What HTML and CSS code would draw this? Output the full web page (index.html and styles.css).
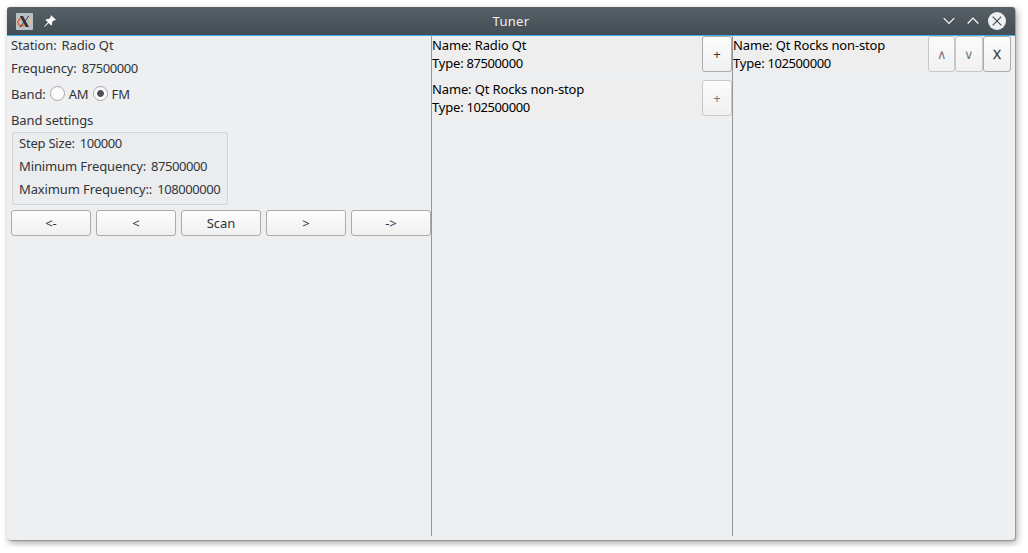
FILE: index.html
```html
<!DOCTYPE html>
<html lang="en">
<head>
<meta charset="utf-8">
<title>Tuner</title>
<link rel="stylesheet" href="styles.css">
</head>
<body>
<div class="window">
  <header class="titlebar">
    <div class="side">
      <svg class="app-icon" width="17" height="17" viewBox="0 0 17 17">
        <rect width="17" height="17" rx="1" fill="#b9c1c5"/>
        <path d="M6.500 5C3 5.500 1.500 8 2.200 10.500c.8 2.200 3.500 2.800 6.300 1.800" fill="none" stroke="#ea6a3c" stroke-width="1.700"/>
        <path d="M11 5c3.500.5 5 2.500 3.700 5-.8 1.500-2.500 2.300-4.500 2.700" fill="none" stroke="#ecc28e" stroke-width="1.200"/>
        <path d="M3.800 3h3.200l6 11H9.800z" fill="#30363a"/>
        <path d="M13 2.700L4 14.200" stroke="#30363a" stroke-width="1"/>
      </svg>
      <svg class="pin" width="12" height="12" viewBox="0 0 12 12">
        <path d="M7.200.2l4.600 4.600-1 .7-.8-.2-2 2 .2 2.200-1.100.9-2.400-2.400L.8 11.800l-.6-.6L3.900 7.300 1.500 4.900l1.100-1 2.200.2 2-2.100-.2-.9z" fill="#fcfcfc"/>
      </svg>
    </div>
    <div class="title">Tuner</div>
    <div class="side controls">
      <svg width="12" height="8" viewBox="0 0 12 8"><path d="M.7 1.200L6 6.500l5.300-5.300" class="stroke"/></svg>
      <svg width="12" height="8" viewBox="0 0 12 8"><path d="M.7 6.500L6 1.200l5.300 5.300" class="stroke"/></svg>
      <svg class="close" width="18" height="18" viewBox="0 0 18 18"><circle cx="9" cy="9" r="9" fill="#eff0f1"/><path d="M4.700 4.700l8.600 8.600M13.300 4.700l-8.600 8.600" stroke="#475057" stroke-width="1.200"/></svg>
    </div>
  </header>
  <main class="content">
    <section class="tuner">
      <div class="row"><span>Station:</span><span>Radio Qt</span></div>
      <div class="row"><span>Frequency:</span><span class="num">87500000</span></div>
      <div class="row band"><span>Band:</span><i class="radio"></i><span>AM</span><i class="radio on"></i><span>FM</span></div>
      <div class="row heading">Band settings</div>
      <div class="group">
        <div class="row step"><span>Step Size:</span><span class="num">100000</span></div>
        <div class="row"><span>Minimum Frequency:</span><span class="num">87500000</span></div>
        <div class="row"><span>Maximum Frequency::</span><span class="num">108000000</span></div>
      </div>
      <div class="buttons">
        <button class="btn">&lt;-</button>
        <button class="btn">&lt;</button>
        <button class="btn">Scan</button>
        <button class="btn">&gt;</button>
        <button class="btn">-&gt;</button>
      </div>
    </section>
    <section class="list stations">
      <div class="item">
        <div class="info"><div class="name">Name: Radio Qt</div><div>Type: <span class="num">87500000</span></div></div>
        <button class="btn tall plus">+</button>
      </div>
      <div class="item">
        <div class="info"><div class="name">Name: Qt Rocks non-stop</div><div>Type: <span class="num">102500000</span></div></div>
        <button class="btn tall plus" disabled>+</button>
      </div>
    </section>
    <section class="list presets">
      <div class="item">
        <div class="info"><div class="name">Name: Qt Rocks non-stop</div><div>Type: <span class="num">102500000</span></div></div>
        <button class="btn tall arrow" disabled>∧</button>
        <button class="btn tall" disabled>∨</button>
        <button class="btn tall remove">X</button>
      </div>
    </section>
  </main>
</div>
</body>
</html>
```
FILE: styles.css
```css
* { box-sizing: border-box; }

body {
  margin: 0;
  padding: 7px;
  background: #fff;
  font: 13px/18px "Noto Sans", sans-serif;
  color: #31363b;
}

.window {
  width: 1008px;
  height: 533px;
  display: flex;
  flex-direction: column;
  border-radius: 3px;
  overflow: hidden;
  background: #eeeff1;
  box-shadow: 0 0 1px rgba(0, 0, 0, 0.25), 1px 1px 1px rgba(0, 0, 0, 0.22), 2px 3px 7px rgba(0, 0, 0, 0.34);
}

.titlebar {
  height: 29px;
  flex: none;
  display: flex;
  align-items: center;
  padding: 0 9px;
  background: linear-gradient(#566067, #444d54);
  border-bottom: 1px solid #3daee9;
  color: #eff0f1;
}

.side { flex: 1; display: flex; align-items: center; gap: 11px; }
.controls { justify-content: flex-end; gap: 12px; }
.close { margin-left: -3px; }
.stroke { fill: none; stroke: #fcfcfc; stroke-width: 1.2; }
.title { letter-spacing: 0.3px; }

.content { flex: 1; display: flex; padding-bottom: 4px; }

.tuner { width: 424px; padding-left: 4px; letter-spacing: -0.12px; }
.num { letter-spacing: -0.43px; }
.row { display: flex; gap: 5px; height: 18px; margin-bottom: 5px; white-space: nowrap; }
.band { height: 24px; align-items: center; gap: 4px; margin-bottom: 5px; }
.heading { margin-bottom: 3px; letter-spacing: -0.12px; }
.step { letter-spacing: -0.22px; }

.radio {
  width: 15px;
  height: 15px;
  margin-top: -2px;
  border: 1px solid #a6a8ab;
  border-radius: 50%;
  background: #fcfcfc;
}
.radio.on { background: radial-gradient(circle, #4d5155 3px, #fcfcfc 3.8px); }

.group {
  width: 216px;
  height: 73px;
  margin: 0 0 5px 1px;
  padding: 1px 6px;
  border: 1px solid #d2d4d6;
  border-radius: 2px;
  background: #ebecee;
}

.buttons { display: flex; gap: 5px; }
.btn {
  width: 80px;
  height: 26px;
  padding: 0;
  border: 1px solid #a9abad;
  border-radius: 3px;
  background: linear-gradient(#fdfdfd, #f0f0f1);
  color: #31363b;
  font: inherit;
}
.btn.tall { width: 28px; height: 36px; flex: none; }
.btn.plus { width: 30px; }
.btn.arrow { width: 27px; }
.btn.remove { -webkit-text-stroke: 0.3px #31363b; }
.btn:disabled { border-color: #c5c7c8; color: #76797c; background: linear-gradient(#fbfbfb, #f1f1f2); }

.list { border-left: 1px solid #979899; color: #000; letter-spacing: -0.2px; }
.name { letter-spacing: -0.14px; }
.stations { width: 301px; }
.presets { flex: 1; padding-right: 4px; }
.item { display: flex; height: 36px; margin-bottom: 8px; background: #eee; }
.info { flex: 1; white-space: nowrap; }
```
